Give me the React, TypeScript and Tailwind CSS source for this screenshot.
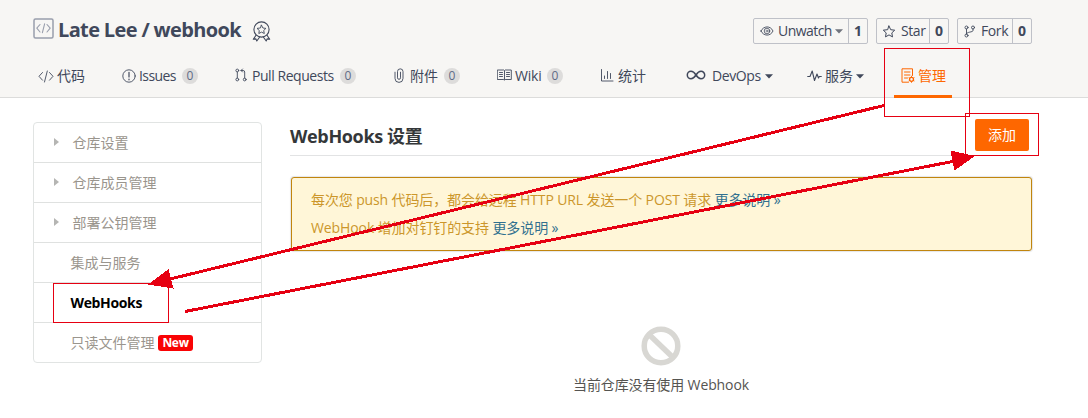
import type { ReactNode } from "react";

const stroke = { fill: "none", stroke: "currentColor", strokeWidth: 0.9, strokeLinecap: "round", strokeLinejoin: "round" } as const;

function Caret() {
  return (
    <svg width="8" height="5" viewBox="0 0 8 5" className="shrink-0">
      <path d="M0 0.3h8L4 4.6z" fill="currentColor" />
    </svg>
  );
}

function Count() {
  return (
    <span className="flex h-4 w-4 shrink-0 items-center justify-center rounded-full bg-[#dddcdb] text-[12px] leading-4 text-[#5f6b86]">
      0
    </span>
  );
}

type TabProps = { width: string; icon: ReactNode; iconBox: string; label: string; labelBox: string; extra?: ReactNode };

function Tab({ width, icon, iconBox, label, labelBox, extra }: TabProps) {
  return (
    <div className={`flex h-full shrink-0 items-center ${width}`}>
      <span className={`flex shrink-0 items-center ${iconBox}`}>{icon}</span>
      <span className={`shrink-0 whitespace-nowrap ${labelBox}`}>{label}</span>
      {extra}
    </div>
  );
}

function RepoButton({ width, icon, label, labelBox, count, countBox, caret }: {
  width: string; icon: ReactNode; label: string; labelBox: string; count: string; countBox: string; caret?: boolean;
}) {
  return (
    <div className={`flex h-[26px] shrink-0 rounded-[2px] border border-[#bfc1c8] text-[14px] text-[#40485b] ${width}`}>
      <div className="flex flex-1 items-center">
        {icon}
        <span className={`shrink-0 whitespace-nowrap leading-5 ${labelBox}`}>{label}</span>
        {caret && <span className="text-[#70747e]"><Caret /></span>}
      </div>
      <div className={`flex items-center justify-center border-l border-[#bfc1c8] font-bold leading-5 ${countBox}`}>{count}</div>
    </div>
  );
}

function SideItem({ label, arrow, active, badge, last }: {
  label: string; arrow?: boolean; active?: boolean; badge?: string; last?: boolean;
}) {
  return (
    <div className={`flex h-10 items-center ${last ? "" : "border-b border-[#dfe1e0]"}`}>
      {arrow ? (
        <span className="flex w-[38.500px] pb-[2px] pl-5">
          <svg width="5" height="8" viewBox="0 0 5 8"><path d="M0 0L5 4L0 8z" fill="#b5b5b3" /></svg>
        </span>
      ) : (
        <span className="w-[36.500px]" />
      )}
      <span className={`whitespace-nowrap text-[14px] leading-5 ${active ? "font-bold tracking-[-0.35px] text-black" : "text-[#9a958d]"}`}>
        {label}
      </span>
      {badge && (
        <span className="ml-[3.500px] flex h-4 w-[35px] items-center justify-center rounded-[3px] bg-[#f90305] text-[12px] font-bold leading-4 tracking-[-0.3px] text-white">
          {badge}
        </span>
      )}
    </div>
  );
}

function Header() {
  return (
    <header className="h-[98px] border-b border-[#dcdcdb] bg-[#f7f6f4] text-[#40485b]">
      <div className="flex h-[54px] items-start pl-[33px] pt-[18px]">
        <svg width="21" height="21" viewBox="0 0 21 21" className="shrink-0 text-[#999eac]">
          <rect x="1" y="1" width="19" height="19" rx="1.5" {...stroke} strokeWidth={1.5} />
          <path d="M7 6.5L3.8 10.2L7 14M14 6.5l3.2 3.7L14 14M11.6 5.8L9.4 14.6" {...stroke} strokeWidth={1.1} />
        </svg>
        <h1 className="-mt-[1px] ml-[4px] w-[194px] shrink-0 whitespace-nowrap text-[20px] font-bold leading-[26px] tracking-[-0.64px]">
          Late Lee / webhook
        </h1>
        <svg width="20" height="21" viewBox="0 0 20 21" className="mt-[3px] shrink-0">
          <circle cx="9.5" cy="8.5" r="7.6" {...stroke} strokeWidth={1.1} />
          <path d="M9.5 4.2l1.4 2.8 3 .4-2.2 2.1.6 3-2.8-1.4-2.7 1.4.5-3L5 7.400l3.100-.4z" {...stroke} />
          <path d="M4 14.300L1.300 18.200l2.600-.3.900 2.100 2.900-4M15 14.300l2.700 3.900-2.600-.3-.9 2.100-2.900-4" {...stroke} strokeWidth={1.1} />
        </svg>
        <div className="ml-[481px] flex">
          <RepoButton width="w-[115px]" label="Unwatch" labelBox="w-[57px] tracking-[-0.55px]" count="1" countBox="w-[19px]" caret
            icon={
              <svg width="24" height="12" viewBox="0 0 24 12" className="shrink-0">
                <path d="M7 6C9.500 .5 16.500 .5 19 6C16.500 11.500 9.500 11.500 7 6z" {...stroke} />
                <circle cx="13" cy="6" r="2.800" {...stroke} strokeWidth={0.8} /><circle cx="13" cy="6" r="1" {...stroke} strokeWidth={0.6} />
              </svg>
            } />
          <span className="w-2" />
          <RepoButton width="w-[73px]" label="Star" labelBox="w-[27px] tracking-[-0.4px]" count="0" countBox="w-[19px]"
            icon={
              <svg width="24" height="13" viewBox="0 0 24 13" className="shrink-0">
                <path d="M12 1l1.700 3.700 4 .5-2.900 2.700.7 4-3.500-2-3.500 2 .7-4-2.900-2.700 4-.5z" {...stroke} strokeWidth={1} />
              </svg>
            } />
          <span className="w-2" />
          <RepoButton width="w-[75px]" label="Fork" labelBox="w-[28px] tracking-[-0.4px]" count="0" countBox="w-[19px]"
            icon={
              <svg width="23" height="13" viewBox="0 0 23 13" className="shrink-0">
                <g {...stroke}>
                  <circle cx="8.500" cy="2.500" r="1.500" /><circle cx="8.500" cy="10.500" r="1.500" /><circle cx="15" cy="2.500" r="1.500" />
                  <path d="M8.500 4v5M15 4v1.500c0 2-6.500 1-6.500 3.500" />
                </g>
              </svg>
            } />
        </div>
      </div>
      <nav className="flex h-11 pl-[38px] text-[14px] leading-5">
        <Tab width="w-[84px]" iconBox="w-[19px]" label="代码" labelBox=""
          icon={<svg width="16" height="13" viewBox="0 0 16 13"><path d="M4.500 2.500L1 6.300l3.500 3.900M11.500 2.500L15 6.300l-3.500 3.900M9.300 1L6.500 12" {...stroke} /></svg>} />
        <Tab width="w-[113px]" iconBox="w-[17px]" label="Issues" labelBox="w-[43px] tracking-[-0.6px]" extra={<Count />}
          icon={<svg width="14" height="14" viewBox="0 0 14 14"><circle cx="7" cy="7" r="6.200" {...stroke} /><path d="M7 3.300v4.700M7 10v.8" {...stroke} strokeWidth={1.200} /></svg>} />
        <Tab width="w-[159px]" iconBox="w-[17px]" label="Pull Requests" labelBox="w-[88px] tracking-[-0.45px]" extra={<Count />}
          icon={
            <svg width="12" height="14" viewBox="0 0 12 14" className="-mt-[2px]">
              <g {...stroke}><circle cx="2.300" cy="2.500" r="1.400" /><circle cx="2.300" cy="11.500" r="1.400" /><circle cx="9.700" cy="11.500" r="1.400" />
                <path d="M2.300 4v6M9.700 10V4Q9.700 2.500 8 2.500H6M7.500 1L6 2.500l1.500 1.500" /></g>
            </svg>
          } />
        <Tab width="w-[103px]" iconBox="w-[16px]" label="附件" labelBox="w-[34px]" extra={<Count />}
          icon={<svg width="10" height="15" viewBox="0 0 10 15" className="-mt-[2px]"><path d="M1 4.200v6.200a4 4 0 0 0 8 0V3.600a2.700 2.700 0 0 0-5.500 0v6.200a1.500 1.500 0 0 0 3 0V4.200" {...stroke} /></svg>} />
        <Tab width="w-[103px]" iconBox="w-[18px]" label="Wiki" labelBox="w-[32px] tracking-[-0.2px]" extra={<Count />}
          icon={<svg width="15" height="12" viewBox="0 0 15 12" className="-mt-[2px]"><path d="M.7 1h6.100l.7.6.7-.6h6.100v9.500H8.200l-.7.700-.7-.7H.7zM7.500 2v8.500M2.500 3.500h3M2.500 5.500h3M2.500 7.500h3M9.500 3.500h3M9.500 5.500h3M9.500 7.500h3" {...stroke} /></svg>} />
        <Tab width="w-[86px]" iconBox="w-[18px]" label="统计" labelBox=""
          icon={<svg width="14" height="13" viewBox="0 0 14 13" className="-mt-[2px]"><path d="M1.500 .5v11.500H13M4.500 9.500V7M7.500 9.500V2.500M10.500 9.500V4.500" {...stroke} /></svg>} />
        <Tab width="w-[121px]" iconBox="w-[26px]" label="DevOps" labelBox="w-[53px] tracking-[-0.4px]" extra={<Caret />}
          icon={<svg width="20" height="10" viewBox="0 0 20 10" className="-mt-[2px]"><path d="M10 5C8.500 2.700 7 1.300 5 1.300a3.700 3.700 0 0 0 0 7.400C7 8.700 8.500 7.300 10 5S13 1.300 15 1.300a3.700 3.700 0 0 1 0 7.400C13 8.700 11.500 7.300 10 5z" {...stroke} strokeWidth={1.500} /></svg>} />
        <Tab width="w-[87px]" iconBox="w-[18px]" label="服务" labelBox="w-[31px]" extra={<Caret />}
          icon={<svg width="15" height="12" viewBox="0 0 15 12" className="-mt-[1px]"><path d="M.7 6.500h2.300L5.200 1l2.300 9.500L10 4l1.500 4 .8-1.500h2" {...stroke} strokeWidth={1.100} /></svg>} />
        <div className="flex h-11 w-[58px] border-b-[3px] border-[#fe6700] pl-[7px] pt-[3px] text-[#fe6700]">
          <Tab width="" iconBox="w-[17px]" label="管理" labelBox=""
            icon={
              <svg width="14" height="15" viewBox="0 0 14 15" className="-mt-[2px]">
                <path d="M11.500 7.500V.8H1v13.400h6.500M3.500 4h5.500M3.500 7h5.500M3.500 10h3" {...stroke} strokeWidth={1} />
                <circle cx="10.500" cy="11.300" r="2" {...stroke} strokeWidth={1.300} />
                <path d="M10.500 8.200v1M10.500 13.400v1M8 9.800l.8.500M12.300 12.300l.8.500M8 12.800l.8-.5M12.300 10.300l.8-.5" {...stroke} />
              </svg>
            } />
        </div>
      </nav>
    </header>
  );
}

function Annotations() {
  return (
    <svg width="1088" height="418" viewBox="0 0 1088 418" className="pointer-events-none absolute left-0 top-0">
      <g fill="none" stroke="#e60012" shapeRendering="crispEdges">
        <rect x="884.500" y="48.500" width="85" height="68" />
        <rect x="965.500" y="113.500" width="73" height="42" />
        <rect x="53.500" y="283.500" width="115" height="39" />
        <path d="M884 105.500L168 279.500M185 311.500L955 161" strokeWidth="3" />
      </g>
      <g fill="#e60012" shapeRendering="crispEdges">
        <path d="M148 284.500L168.500 269L173.500 288.500z" />
        <path d="M975 156L950.500 150.500L954.500 170.500z" />
      </g>
    </svg>
  );
}

export default function App() {
  return (
    <div className="relative h-[418px] w-[1088px] overflow-hidden bg-white font-['Open_Sans','Noto_Sans_CJK_SC',sans-serif]">
      <Header />
      <main className="flex pl-[33px] pt-6">
        <aside className="h-[241px] w-[229px] shrink-0 rounded-[4px] border border-[#e1e4e3]">
          <SideItem label="仓库设置" arrow />
          <SideItem label="仓库成员管理" arrow />
          <SideItem label="部署公钥管理" arrow />
          <SideItem label="集成与服务" />
          <SideItem label="WebHooks" active />
          <SideItem label="只读文件管理" badge="New" last />
        </aside>
        <section className="ml-7 w-[742px]">
          <div className="flex h-[34px] items-start justify-between border-b border-[#e2e3e4]">
            <h2 className="whitespace-nowrap text-[18px] font-bold leading-[28px] tracking-[-0.35px] text-[#343739]">WebHooks 设置</h2>
            <button className="-mt-[3px] mr-[3px] h-8 w-[54px] shrink-0 rounded-[2px] bg-[#fe6700] text-[14px] leading-8 text-white">添加</button>
          </div>
          <div className="ml-[1px] mt-[21px] h-[74px] rounded-[3px] border border-[#c1850d] bg-[#fff6d8] pl-[19px] pt-2 text-[14px] leading-7 text-[#cc962b] shadow-[0_0_1px_1px_#e5e6e8]">
            <p className="whitespace-nowrap tracking-[-0.12px]">每次您 push 代码后，都会给远程 HTTP URL 发送一个 POST 请求 <a className="text-[#31708f]">更多说明 »</a></p>
            <p className="whitespace-nowrap tracking-[-0.1px]">WebHook 增加对钉钉的支持 <a className="text-[#31708f]">更多说明 »</a></p>
          </div>
          <div className="flex flex-col items-center pt-[75px]">
            <svg width="40" height="40" viewBox="0 0 40 40">
              <circle cx="20" cy="20" r="16.800" fill="none" stroke="#d8d7d3" strokeWidth="5.500" />
              <path d="M8 8.500L32 31.500" stroke="#d8d7d3" strokeWidth="5.500" />
            </svg>
            <p className="mt-[9px] whitespace-nowrap text-[14px] leading-5 tracking-[-0.12px] text-[#555451]">当前仓库没有使用 Webhook</p>
          </div>
        </section>
      </main>
      <Annotations />
    </div>
  );
}
